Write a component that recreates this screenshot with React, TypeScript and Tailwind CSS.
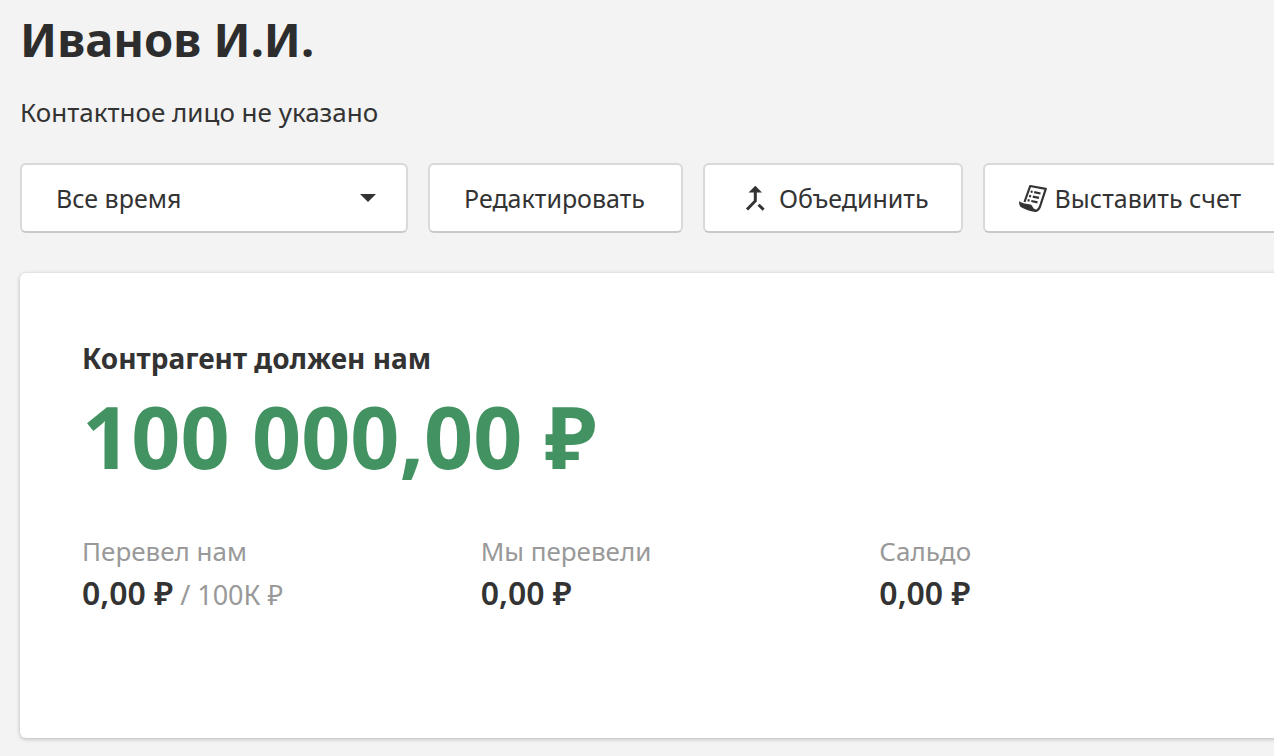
import type { ReactNode } from "react";

function MergeIcon() {
  return (
    <svg viewBox="0 0 20 28" className="h-7 w-5 shrink-0" fill="none" stroke="#333" strokeWidth="3" aria-hidden="true">
      <path d="M10.300 6V17L2 25.500" />
      <path d="M13.600 20.800L18.600 25.700" />
      <path d="M10.300 1.700L17 8.500H3.600Z" fill="#333" stroke="none" />
    </svg>
  );
}

function InvoiceIcon() {
  return (
    <svg viewBox="0 0 28 28" className="size-7 shrink-0" fill="none" stroke="#333" aria-hidden="true">
      <path d="M5.500 18L11.200 2L26.800 4.900L21 22.500Q19 27.400 15.500 26.900" strokeWidth="2.200" strokeLinejoin="round" />
      <path d="M0 17.200C3 19.400 7.500 19.800 11.500 20.600C13.400 21 13 24 16.800 25.800V28C12.500 28 6.500 25.400 2.600 23.600C0.800 22.600 0 20.500 0 17.200Z" fill="#333" stroke="none" />
      <path d="M15.200 8.200L21.500 9.500M13.800 12.600L20 13.900M12.300 17L18.500 18.300" strokeWidth="2.200" />
      <path d="M11.600 7.500L13.600 7.900M10.100 11.900L12.100 12.300M8.600 16.200L10.600 16.600" strokeWidth="2.200" />
    </svg>
  );
}

const control =
  "h-[70px] shrink-0 rounded-md border-2 border-[#d9d9d9] border-b-[#c9c9c9] bg-white text-[25px] leading-8 whitespace-nowrap";

function ActionButton({ padding, icon, children }: { padding: string; icon?: ReactNode; children: ReactNode }) {
  return (
    <button type="button" className={`${control} flex items-center ${padding}`}>
      {icon}
      {children}
    </button>
  );
}

function Stat({ label, value, total }: { label: string; value: string; total?: string }) {
  return (
    <div>
      <dt className="text-[26px] leading-9 text-[#999]">{label}</dt>
      <dd className="mt-1 text-[32px] leading-10 font-semibold">
        {value}
        {total && <span className="text-[27px] font-normal text-[#999]"> / {total}</span>}
      </dd>
    </div>
  );
}

export default function App() {
  return (
    <main className="min-h-screen overflow-hidden bg-[#f3f3f3] pt-[10px] pb-[18px] pl-5 font-['Noto_Sans',sans-serif] text-[#333]">
      <h1 className="text-[47px] leading-[58px] font-bold text-[#2d2d2d]">Иванов И.И.</h1>
      <p className="mt-7 text-[26px] leading-8">Контактное лицо не указано</p>

      <div className="mt-[35px] flex gap-5">
        <div className="relative w-[388px] shrink-0">
          <select aria-label="Период" className={`${control} w-full appearance-none px-[34px]`}>
            <option>Все время</option>
          </select>
          <svg viewBox="0 0 16 8" className="pointer-events-none absolute top-[31px] right-8 h-2 w-4" fill="#333" aria-hidden="true">
            <path d="M0 0H16L8 8Z" />
          </svg>
        </div>
        <ActionButton padding="pl-[34px] pr-9">Редактировать</ActionButton>
        <ActionButton padding="pl-10 pr-8" icon={<span className="mr-3.5 flex"><MergeIcon /></span>}>Объединить</ActionButton>
        <ActionButton padding="pl-[34px] pr-9" icon={<span className="mr-2 flex"><InvoiceIcon /></span>}>Выставить счет</ActionButton>
      </div>

      <section className="mt-10 -mr-1 rounded-l-md bg-white pt-[65px] pb-[123px] pl-[62px] shadow-[0_1px_4px_rgba(0,0,0,0.25)]">
        <h2 className="text-[28px] leading-10 font-bold">Контрагент должен нам</h2>
        <p className="mt-2 text-[86px] leading-[100px] font-bold whitespace-nowrap text-[#439262]">100 000,00 ₽</p>
        <dl className="mt-[47px] grid grid-cols-3">
          <Stat label="Перевел нам" value="0,00 ₽" total="100К ₽" />
          <Stat label="Мы перевели" value="0,00 ₽" />
          <Stat label="Сальдо" value="0,00 ₽" />
        </dl>
      </section>
    </main>
  );
}
